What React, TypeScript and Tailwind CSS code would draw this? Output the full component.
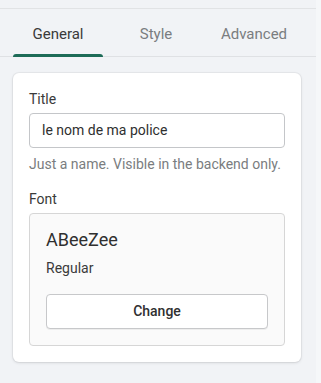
import React from "react"

const tabs = ["General", "Style", "Advanced"]

export default function App() {
  return (
    <div
      className="w-[321px] h-[383px] bg-[#f1f3f6] flex text-[#303030]"
      style={{ fontFamily: "Roboto, 'Noto Sans', sans-serif" }}
    >
      <div className="w-[316px] pt-2">
        <div className="border-t border-[#e1e3e5]" />

        <div className="flex pl-[9px] h-[48px] border-b border-[#dfe1e4]">
          {tabs.map((tab, i) => (
            <div key={tab} className="w-[98px] flex flex-col">
              <div
                className={
                  "flex-1 flex items-center justify-center pt-[5px] text-[15px] " +
                  (i === 0 ? "text-[#3a3a3a]" : "text-[#7a7d80]")
                }
              >
                {tab}
              </div>
              {i === 0 ? (
                <div className="mx-1 h-[3px] rounded-t-sm bg-[#1d6b57] -mb-px" />
              ) : (
                <div className="h-[3px] -mb-px" />
              )}
            </div>
          ))}
        </div>

        <div className="ml-[13px] mr-[15px] mt-4 bg-white rounded-md shadow-[0_0_0_1px_rgba(63,63,68,0.05),0_1px_3px_0_rgba(63,63,68,0.15)] p-4">
          <div className="text-[14px] leading-5 text-[#3a3a3a]">Title</div>
          <div className="mt-1 h-[35px] border border-[#c4c6c9] rounded-[4px] px-3 flex items-center text-[14px] text-[#2f2f2f]">
            le nom de ma police
          </div>
          <div className="mt-[6px] text-[14px] leading-5 text-[#7a7d80]">
            Just a name. Visible in the backend only.
          </div>

          <div className="mt-[15px] text-[14px] leading-5 text-[#3a3a3a]">Font</div>
          <div className="mt-[4px] bg-[#fafafa] border border-[#d6d6d6] rounded-[4px] px-4 pt-[14px] pb-4">
            <div className="text-[18px] leading-6 text-[#2f2f2f]">ABeeZee</div>
            <div className="mt-[6px] text-[14px] leading-5 text-[#3a3a3a]">Regular</div>
            <button className="mt-[16px] w-full h-[35px] bg-white border border-[#c7c8ca] rounded-[4px] shadow-[0_1px_0_0_rgba(0,0,0,0.05)] text-[14px] font-medium text-[#303030]">
              Change
            </button>
          </div>
        </div>
      </div>
      <div className="w-[5px] bg-[#f5f7f9]" />
    </div>
  )
}
